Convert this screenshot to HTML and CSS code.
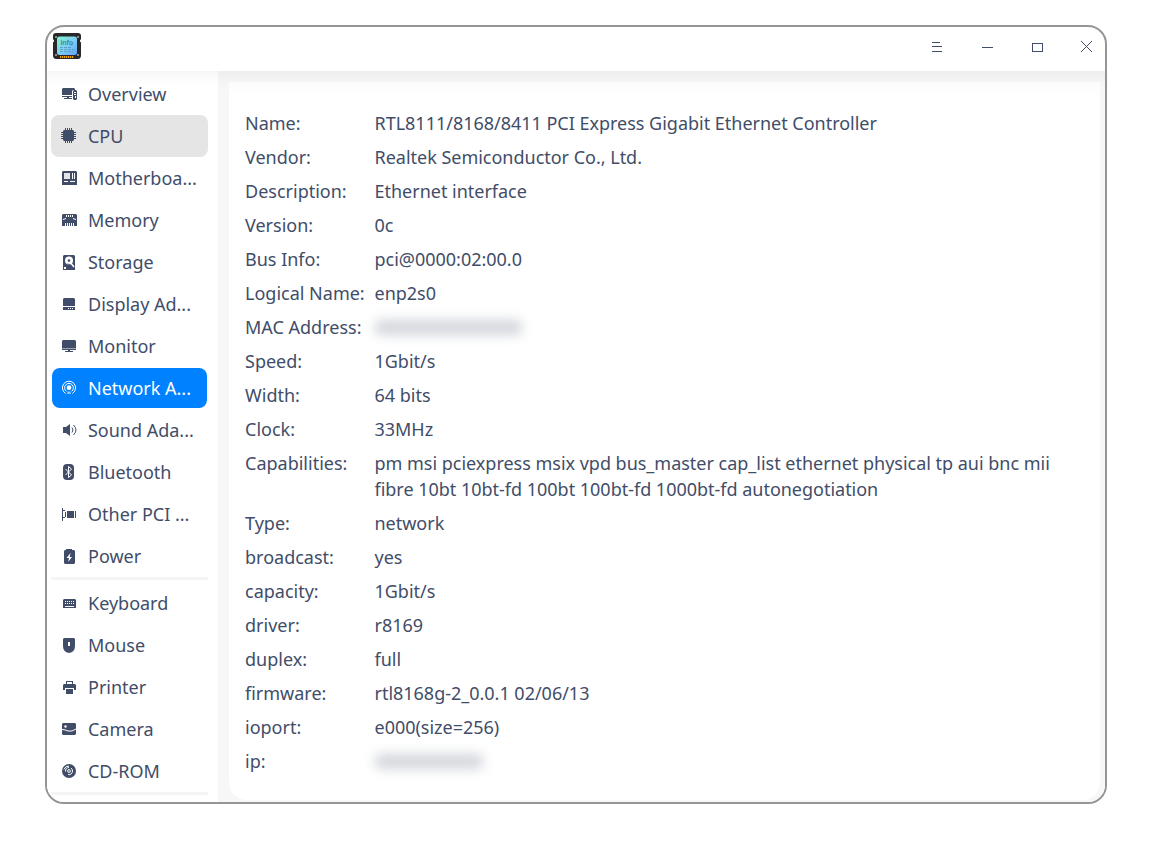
FILE: index.html
```html
<!DOCTYPE html>
<html lang="en">
<head>
<meta charset="utf-8">
<title>Device Manager</title>
<link rel="stylesheet" href="styles.css">
</head>
<body>
<div class="window">
  <header class="titlebar">
    <svg class="logo" width="28" height="28" viewBox="0 0 28 28">
      <defs>
        <linearGradient id="screen" x1="0" y1="0" x2="1" y2="1"><stop offset="0" stop-color="#7df5d0"/><stop offset=".5" stop-color="#7fd0f5"/><stop offset="1" stop-color="#62a0fb"/></linearGradient>
      </defs>
      <path fill="#282828" d="M3 1h22q3 0 3 3v3l-1 1.500v1l1 1V23q0 4-3 4H3q-3 0-3-4V10.500l1-1v-1L0 7V4q0-3 3-3z"/>
      <g fill="#a8adb0"><circle cx="3" cy="5" r="1"/><circle cx="25" cy="5" r="1"/><circle cx="3" cy="23" r="1"/><circle cx="25" cy="23" r="1"/></g>
      <rect x="4" y="4.500" width="20" height="18.500" rx="2.500" fill="url(#screen)"/>
      <text class="logo-text" x="7.500" y="13">info</text>
      <path stroke="#5795bd" stroke-width=".8" stroke-dasharray="3 1" d="M7 15.500h11M7 17.500h14M7 19.500h13"/>
      <path stroke="#f5a800" stroke-width="2" stroke-dasharray="1.200 .8" d="M7 25h14"/>
    </svg>
    <svg class="controls" width="170" height="20" viewBox="0 0 170 20" fill="none" stroke="#414d68" shape-rendering="crispEdges">
      <path d="M2 5.500h8M2 9.500h10M2 14.500h10"/>
      <path d="M52 10.500h11"/>
      <path d="M102.500 6.500h10v8h-10z"/>
      <path d="M151 4l11 11M162 4l-11 11" shape-rendering="auto"/>
    </svg>
  </header>
  <div class="body">
    <nav class="sidebar">
      <div class="item"><svg viewBox="0 0 16 16"><path d="M1 2h11l1 1v1h-2l-1 1v4H0V3zM0 10h10v1H0zM5 11h2v1h3v1H2v-1h3z"/><path fill-rule="evenodd" d="M12 4h2l1 1v8l-1 1h-2l-1-1V5zm0 2v1h2V6zm0 2v1h2V8zm1 2v2h1v-2z"/></svg>Overview</div>
      <div class="item hover"><svg viewBox="0 0 16 16"><path d="M3 2h9l1 1v9l-1 1H3l-1-1V3z"/><path stroke="currentColor" d="M4.500 0v15M6.500 0v15M8.500 0v15M10.500 0v15M0 4.500h15M0 6.500h15M0 8.500h15M0 10.500h15"/></svg>CPU</div>
      <div class="item"><svg viewBox="0 0 16 16"><path fill-rule="evenodd" d="M1 1h13l1 1v13H0V2zM2 3v6h6V3zm8 0v6h1V3zm2 0v6h1V3zM2 11v1h4v-1zm6 0v1h5v-1z"/><path d="M2 3h6v6H2z" opacity=".15"/></svg>Motherboa...</div>
      <div class="item"><svg viewBox="0 0 16 16"><path d="M1 2h13l1 1v11H0V3z"/><path class="cut-line" d="M4.500 3v2M6.500 3v2M8.500 3v2M10.500 3v2M3.500 11v3M5.500 11v3M7.500 11v3M9.500 11v3M11.500 11v3M1 7.500l3-1M14 7.500l-3-1"/></svg>Memory</div>
      <div class="item"><svg viewBox="0 0 16 16"><path d="M2 1h10l1 1v14H1V2z"/><circle class="cut" cx="7" cy="6.500" r="4"/><path class="cut" d="M2 13h2v2H2z"/><path class="cut-line" stroke-width="1.500" d="M8 8l4 5"/><circle cx="7" cy="6.500" r="1.300"/><path stroke="currentColor" d="M6 9.500l4 4"/></svg>Storage</div>
      <div class="item"><svg viewBox="0 0 16 16"><path d="M2 2h10l1 1v7H1V3zM1 11h12v3H1z"/><path class="cut" d="M6 12h1v1H6zM8 12h1v1H8zM10 12h1v1h-1z"/></svg>Display Ad...</div>
      <div class="item"><svg viewBox="0 0 16 16"><path d="M1 2h12l1 1v7H0V3zM0 10.500h14V12H0zM6 12h2v1h3v1H3v-1h3z"/></svg>Monitor</div>
      <div class="item active"><svg viewBox="0 0 16 16"><circle cx="7" cy="7.700" r="2.400" fill="currentColor"/><path fill="none" stroke="currentColor" d="M4.500 11.400A4.400 4.400 0 1 1 9.500 11.400M3.700 13.500A6.600 6.600 0 1 1 10.300 13.500"/><path d="M5.500 11.500h3L9 14H5z" fill="currentColor" opacity=".55"/></svg>Network A...</div>
      <div class="item"><svg viewBox="0 0 16 16"><path d="M1 5h3l4-3v12l-4-3H1z"/><path fill="none" stroke="currentColor" d="M10 5.500q2 2.500 0 5M11.500 3q5 5 0 10"/></svg>Sound Ada...</div>
      <div class="item"><svg viewBox="0 0 16 16"><rect x="1" width="11" height="16" rx="4"/><path class="cut-line" d="M3.500 5l6 6-3 2.500v-11l3 2.500-6 6"/></svg>Bluetooth</div>
      <div class="item"><svg viewBox="0 0 16 16"><path d="M0 2h1v13H0zM1 4h2v1H1zM1 11h2v1H1zM3 6h1v5H3zM5 5h7v7H5zM13 5h1v7h-1z"/></svg>Other PCI ...</div>
      <div class="item"><svg viewBox="0 0 16 16"><path d="M4 1h6v1h2l1 1v12l-1 1H3l-1-1V3l1-1h1z"/><path class="cut" d="M8.500 5L4.500 10H7l-.8 4L10 9H7.800z"/></svg>Power</div>
      <div class="separator"></div>
      <div class="item"><svg viewBox="0 0 16 16"><path d="M2 4h11l1 1v8H1V5z"/><path class="cut-line" stroke-dasharray="1 1" d="M3 6.500h9M3 8.500h9"/><path class="cut-line" d="M3 11.500h9"/></svg>Keyboard</div>
      <div class="item"><svg viewBox="0 0 16 16"><path d="M2 1h10l1 1v7q0 6-6 7-6-1-6-7V2z"/><path class="cut" d="M6 5h2v4H6z"/></svg>Mouse</div>
      <div class="item"><svg viewBox="0 0 16 16"><path fill-rule="evenodd" d="M4 2h7v3h2l1 1v5h-2V9H3v2H1V6l1-1h2zm1 1v2h5V3zM4 10h7v5H4z"/></svg>Printer</div>
      <div class="item"><svg viewBox="0 0 16 16"><path d="M1 2h12l1 1v10l-1 1H1l-1-1V3z"/><circle class="cut" cx="3.500" cy="5.500" r="1.200"/><path class="cut-line" fill="none" d="M0 8.500q3 0 6 1.500 4 1 8-2"/></svg>Camera</div>
      <div class="item"><svg viewBox="0 0 16 16"><circle cx="7" cy="8" r="7"/><g class="cut-line" fill="none"><circle cx="7" cy="8" r="1.400"/><path d="M3.500 8.500A3.500 3.500 0 0 1 7 4.500M10.500 8A3.500 3.500 0 0 1 6 11.500M2 6.500Q3 3 7 3M9 5q1.500 1 1.500 3"/></g></svg>CD-ROM</div>
      <div class="separator"></div>
    </nav>
    <main class="content">
      <dl class="card">
        <dt>Name:</dt><dd>RTL8111/8168/8411 PCI Express Gigabit Ethernet Controller</dd>
        <dt>Vendor:</dt><dd>Realtek Semiconductor Co., Ltd.</dd>
        <dt>Description:</dt><dd>Ethernet interface</dd>
        <dt>Version:</dt><dd>0c</dd>
        <dt>Bus Info:</dt><dd>pci@0000:02:00.0</dd>
        <dt>Logical Name:</dt><dd>enp2s0</dd>
        <dt>MAC Address:</dt><dd><span class="masked mac"></span></dd>
        <dt>Speed:</dt><dd>1Gbit/s</dd>
        <dt>Width:</dt><dd>64 bits</dd>
        <dt>Clock:</dt><dd>33MHz</dd>
        <dt>Capabilities:</dt><dd>pm msi pciexpress msix vpd bus_master cap_list ethernet physical tp aui bnc mii<br>fibre 10bt 10bt-fd 100bt 100bt-fd 1000bt-fd autonegotiation</dd>
        <dt>Type:</dt><dd>network</dd>
        <dt>broadcast:</dt><dd>yes</dd>
        <dt>capacity:</dt><dd>1Gbit/s</dd>
        <dt>driver:</dt><dd>r8169</dd>
        <dt>duplex:</dt><dd>full</dd>
        <dt>firmware:</dt><dd>rtl8168g-2_0.0.1 02/06/13</dd>
        <dt>ioport:</dt><dd>e000(size=256)</dd>
        <dt>ip:</dt><dd><span class="masked ip"></span></dd>
      </dl>
    </main>
  </div>
</div>
</body>
</html>
```
FILE: styles.css
```css
* { box-sizing: border-box; }
body {
  margin: 0;
  padding: 25px 48px 47px 45px;
  background: #fff;
  color: #414d68;
  font: 18px/26px "Noto Sans", sans-serif;
}
.window {
  width: 1062px;
  height: 779px;
  border: 2px solid #959595;
  border-radius: 19px;
  overflow: hidden;
  display: flex;
  flex-direction: column;
  background: #fff;
}
.titlebar {
  height: 44px;
  flex: none;
  display: flex;
  align-items: center;
  justify-content: space-between;
  padding: 0 5px 0 6px;
}
.logo { margin-top: -6px; }
.logo-text { font: 6.7px "DejaVu Sans", sans-serif; fill: #2f8590; stroke: #2f8590; stroke-width: .2px; }
.controls { margin-top: -4px; }
.body { flex: 1; min-height: 0; display: flex; }
.sidebar {
  width: 171px;
  flex: none;
  padding: 2px 10px 0 4px;
  background: linear-gradient(#f7f7f7, #fff 14px);
}
.item {
  height: 42px;
  display: flex;
  align-items: center;
  padding-left: 11px;
  border-radius: 8px;
  white-space: nowrap;
  letter-spacing: -.01px;
  --surface: #fff;
}
.item svg {
  width: 16px;
  height: 16px;
  flex: none;
  margin-right: 10px;
  fill: currentColor;
}
.item .cut { fill: var(--surface); }
.item .cut-line { stroke: var(--surface); fill: none; }
.item.hover { background: #e5e5e5; padding-left: 10px; }
.item.hover svg { margin-right: 11px; }
.item.active {
  height: 40px;
  margin: 1px;
  padding-left: 10px;
  background: #0081ff;
  color: #fff;
}
.separator { height: 3px; margin-bottom: 2px; background: #f5f5f5; }
.content {
  flex: 1;
  padding: 11px 5px 2px 11px;
  background: linear-gradient(#efefef, #f7f7f7 16px);
}
.card {
  margin: 0;
  height: 718px;
  padding: 28px 16px 0;
  border-radius: 0 0 18px 18px;
  background: linear-gradient(#fbfbfb, #fff 14px);
  display: grid;
  grid-template-columns: 129.5px 1fr;
  row-gap: 8px;
  align-content: start;
}
dt, dd { margin: 0; white-space: nowrap; }
dd { letter-spacing: -.015px; }
.masked {
  display: block;
  height: 15px;
  margin-top: 6px;
  border-radius: 5px;
  background: #d3d6dc;
  filter: blur(6px);
}
.mac { width: 147px; }
.ip { width: 108px; }
```
